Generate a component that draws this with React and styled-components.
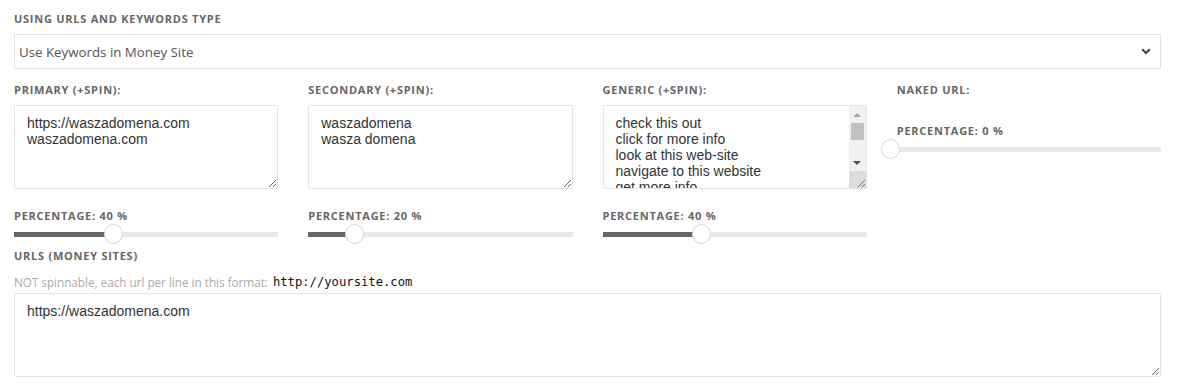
import React from "react";
import styled, { createGlobalStyle } from "styled-components";

const Global = createGlobalStyle`
  html, body { margin: 0; padding: 0; background: #fff; }
  body { font-family: "Open Sans", "Liberation Sans", sans-serif; }
  * { box-sizing: border-box; }
`;

const Page = styled.div`
  width: 1177px;
  padding: 12px 16px 0 14px;
`;

const Label = styled.div`
  font-family: "Open Sans", "Liberation Sans", sans-serif;
  font-weight: 700;
  font-size: 11px;
  letter-spacing: 0.75px;
  line-height: 14px;
  color: #666;
  text-transform: uppercase;
  margin-top: ${(p) => p.$mt || 0}px;
  margin-bottom: ${(p) => (p.$mb == null ? 8 : p.$mb)}px;
  white-space: nowrap;
`;

const SelectWrap = styled.div`
  position: relative;
  height: 35px;
  margin-bottom: 14px;
`;

const Select = styled.select`
  appearance: none;
  -webkit-appearance: none;
  width: 100%;
  height: 35px;
  border: 1px solid #e4e4e4;
  border-radius: 0;
  background: #fff;
  padding: 0 4px;
  font-family: "Open Sans", "Liberation Sans", sans-serif;
  font-size: 13.3px;
  color: #555;
  outline: none;
`;

const Chevron = styled.svg`
  position: absolute;
  right: 10px;
  top: 14px;
  pointer-events: none;
`;

const Columns = styled.div`
  display: grid;
  grid-template-columns: repeat(4, 1fr);
  column-gap: 30px;
`;

const Col = styled.div`
  display: flex;
  flex-direction: column;
`;

const AreaWrap = styled.div`
  position: relative;
`;

const Area = styled.textarea`
  display: block;
  width: 100%;
  height: 84px;
  border: 1px solid #e4e4e4;
  border-radius: 2px;
  padding: 9px ${(p) => (p.$bar ? 30 : 12)}px 9px 12px;
  font-family: "Liberation Sans", Arial, sans-serif;
  font-size: 14px;
  line-height: 16px;
  color: #333;
  background: #fff;
  outline: none;
  resize: ${(p) => p.$resize || "both"};
  overflow: hidden;
`;

/* decorative scrollbar drawn over the textarea's right edge */
const ScrollBar = styled.div`
  position: absolute;
  top: 1px;
  right: 1px;
  bottom: 1px;
  width: 17px;
  background: #f1f1f1;
  display: flex;
  flex-direction: column;
  pointer-events: none;
`;

const SbButton = styled.div`
  height: 16px;
  display: flex;
  align-items: center;
  justify-content: center;
  flex: none;
`;

const SbTrough = styled.div`
  flex: 1;
  padding: 1px 2px 0;
`;

const SbThumb = styled.div`
  height: 17px;
  background: #c1c1c1;
`;

const SbCorner = styled.div`
  height: 17px;
  flex: none;
  background: #dcdcdc;
  display: flex;
  align-items: flex-end;
  justify-content: flex-end;
`;

const SliderBox = styled.div`
  position: relative;
  height: 20px;
  margin-top: 1px;
  display: flex;
  align-items: center;
`;

const Track = styled.div`
  width: 100%;
  height: 5px;
  background: #e9e9e9;
  position: relative;
`;

const Fill = styled.div`
  position: absolute;
  left: 0;
  top: 0;
  bottom: 0;
  background: #666;
`;

const Thumb = styled.div`
  position: absolute;
  top: 0;
  width: 19px;
  height: 20px;
  border-radius: 50%;
  background: #fff;
  border: 1px solid #d9d9d9;
`;

const Hint = styled.div`
  font-family: "Open Sans", "Liberation Sans", sans-serif;
  font-size: 11.7px;
  line-height: 16px;
  color: #aaa;
  margin: 11px 0 3px;
  display: flex;
  align-items: center;
  gap: 5px;
`;

const Code = styled.code`
  font-family: "DejaVu Sans Mono", "Liberation Mono", monospace;
  font-size: 12.2px;
  color: #111;
`;

function Slider({ value }) {
  return (
    <SliderBox>
      <Track>
        <Fill style={{ width: `calc(${value}% - 6px)` }} />
      </Track>
      <Thumb style={{ left: `calc(${value}% - 16px)` }} />
    </SliderBox>
  );
}

const generic = [
  "check this out",
  "click for more info",
  "look at this web-site",
  "navigate to this website",
  "get more info",
  "visit this site",
  "read more here",
  "discover more",
  "find out more",
  "see more",
].join("\n");

export default function App() {
  return (
    <Page>
      <Global />
      <Label>Using URLs and keywords type</Label>
      <SelectWrap>
        <Select defaultValue="kw">
          <option value="kw">Use Keywords in Money Site</option>
          <option value="urls">Use URLs</option>
        </Select>
        <Chevron width="10" height="7" viewBox="0 0 10 7">
          <path d="M1.2 1.2 L5 5 L8.8 1.2" fill="none" stroke="#444" strokeWidth="2" />
        </Chevron>
      </SelectWrap>

      <Columns>
        <Col>
          <Label>Primary (+spin):</Label>
          <Area defaultValue={"https://waszadomena.com\nwaszadomena.com"} spellCheck={false} />
          <Label $mt={20} $mb={0}>Percentage: 40 %</Label>
          <Slider value={40} />
        </Col>
        <Col>
          <Label>Secondary (+spin):</Label>
          <Area defaultValue={"waszadomena\nwasza domena"} spellCheck={false} />
          <Label $mt={20} $mb={0}>Percentage: 20 %</Label>
          <Slider value={20} />
        </Col>
        <Col>
          <Label>Generic (+spin):</Label>
          <AreaWrap>
            <Area defaultValue={generic} spellCheck={false} $bar />
            <ScrollBar>
              <SbButton>
                <svg width="8" height="5" viewBox="0 0 8 5">
                  <path d="M0 5 L4 1 L8 5 Z" fill="#a3a3a3" />
                </svg>
              </SbButton>
              <SbTrough>
                <SbThumb />
              </SbTrough>
              <SbButton>
                <svg width="8" height="5" viewBox="0 0 8 5">
                  <path d="M0 0 L4 4 L8 0 Z" fill="#505050" />
                </svg>
              </SbButton>
              <SbCorner>
                <svg width="12" height="12" viewBox="0 0 12 12">
                  <path d="M11 4 L4 11 M11 8 L8 11" stroke="#777" strokeWidth="1" />
                </svg>
              </SbCorner>
            </ScrollBar>
          </AreaWrap>
          <Label $mt={20} $mb={0}>Percentage: 40 %</Label>
          <Slider value={40} />
        </Col>
        <Col>
          <Label>Naked URL:</Label>
          <Label $mt={19} $mb={0}>Percentage: 0 %</Label>
          <Slider value={0} />
        </Col>
      </Columns>

      <Label $mt={5} $mb={0}>URLs (money sites)</Label>
      <Hint>
        <span>NOT spinnable, each url per line in this format:</span>
        <Code>http://yoursite.com</Code>
      </Hint>
      <Area defaultValue={"https://waszadomena.com"} spellCheck={false} $resize="vertical" />
    </Page>
  );
}
